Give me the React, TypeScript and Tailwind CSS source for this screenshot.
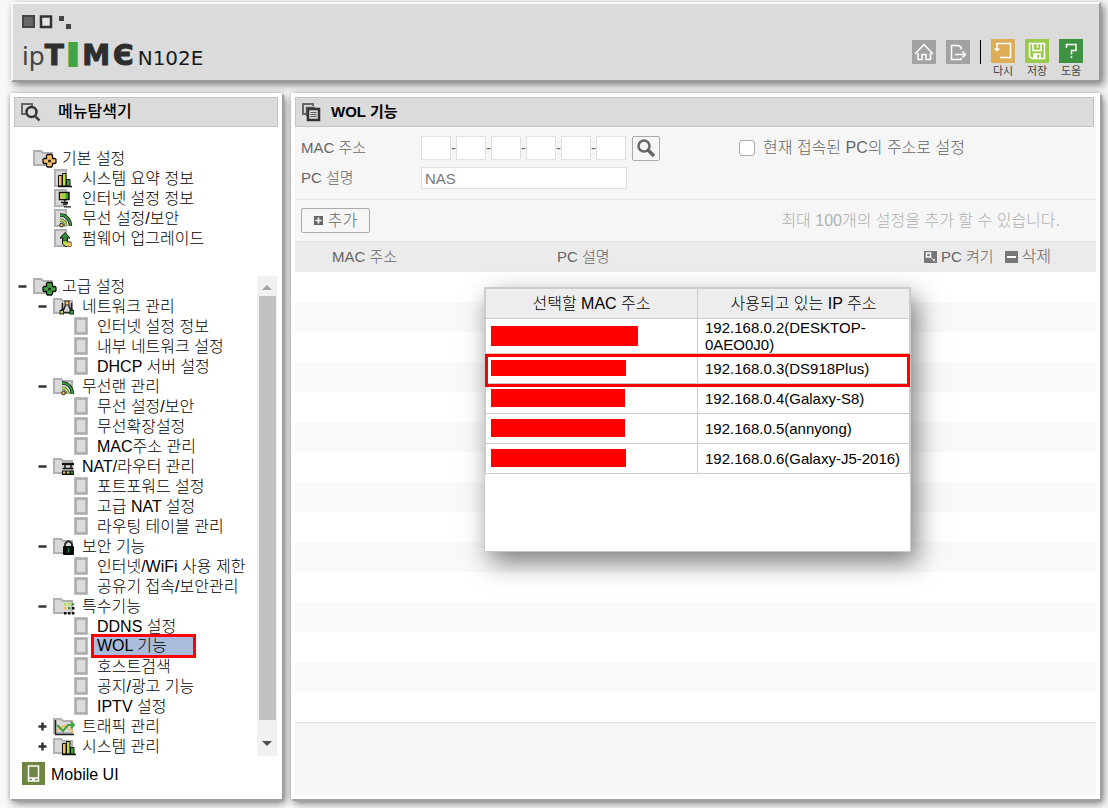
import type { ReactNode } from 'react';

type IconName =
  | 'orange'
  | 'green'
  | 'bars'
  | 'monitor'
  | 'wifi'
  | 'upload'
  | 'network'
  | 'router'
  | 'lock'
  | 'apps'
  | 'traffic'
  | 'folderBars'
  | 'folderWifi'
  | 'page';

interface TreeItem {
  level: 1 | 2 | 3;
  icon: IconName;
  label: string;
  toggle?: 'open' | 'closed';
  selected?: boolean;
}

const basicItems: TreeItem[] = [
  { level: 1, icon: 'orange', label: '기본 설정' },
  { level: 2, icon: 'bars', label: '시스템 요약 정보' },
  { level: 2, icon: 'monitor', label: '인터넷 설정 정보' },
  { level: 2, icon: 'wifi', label: '무선 설정/보안' },
  { level: 2, icon: 'upload', label: '펌웨어 업그레이드' },
];

const advancedItems: TreeItem[] = [
  { level: 1, icon: 'green', label: '고급 설정', toggle: 'open' },
  { level: 2, icon: 'network', label: '네트워크 관리', toggle: 'open' },
  { level: 3, icon: 'page', label: '인터넷 설정 정보' },
  { level: 3, icon: 'page', label: '내부 네트워크 설정' },
  { level: 3, icon: 'page', label: 'DHCP 서버 설정' },
  { level: 2, icon: 'folderWifi', label: '무선랜 관리', toggle: 'open' },
  { level: 3, icon: 'page', label: '무선 설정/보안' },
  { level: 3, icon: 'page', label: '무선확장설정' },
  { level: 3, icon: 'page', label: 'MAC주소 관리' },
  { level: 2, icon: 'router', label: 'NAT/라우터 관리', toggle: 'open' },
  { level: 3, icon: 'page', label: '포트포워드 설정' },
  { level: 3, icon: 'page', label: '고급 NAT 설정' },
  { level: 3, icon: 'page', label: '라우팅 테이블 관리' },
  { level: 2, icon: 'lock', label: '보안 기능', toggle: 'open' },
  { level: 3, icon: 'page', label: '인터넷/WiFi 사용 제한' },
  { level: 3, icon: 'page', label: '공유기 접속/보안관리' },
  { level: 2, icon: 'apps', label: '특수기능', toggle: 'open' },
  { level: 3, icon: 'page', label: 'DDNS 설정' },
  { level: 3, icon: 'page', label: 'WOL 기능', selected: true },
  { level: 3, icon: 'page', label: '호스트검색' },
  { level: 3, icon: 'page', label: '공지/광고 기능' },
  { level: 3, icon: 'page', label: 'IPTV 설정' },
  { level: 2, icon: 'traffic', label: '트래픽 관리', toggle: 'closed' },
  { level: 2, icon: 'folderBars', label: '시스템 관리', toggle: 'closed' },
];

const hosts = [
  { ip: '192.168.0.2(DESKTOP-0AEO0J0)', mask: 'w-[147px] h-5' },
  { ip: '192.168.0.3(DS918Plus)', mask: 'w-[135px] h-4' },
  { ip: '192.168.0.4(Galaxy-S8)', mask: 'w-[134px] h-[18px]' },
  { ip: '192.168.0.5(annyong)', mask: 'w-[134px] h-[18px]' },
  { ip: '192.168.0.6(Galaxy-J5-2016)', mask: 'w-[135px] h-[18px]' },
];

const folder = <path d="M1 3H8L10 5H19V17H1Z" fill="#d9d9d9" stroke="#b0b0b0" strokeWidth="2" />;
const sheet = <path d="M2 2H13V18H2Z" fill="#d9d9d9" stroke="#b0b0b0" strokeWidth="2" />;

const bars = (
  <>
    <path d="M5.5 18V7.500H9V18Z" fill="#f7bd63" stroke="#111" />
    <path d="M9.5 18V5.500H13V18Z" fill="#b4e050" stroke="#111" />
    <path d="M13.5 18V11.500H17V18Z" fill="#3fa33f" stroke="#111" />
    <path d="M5 18.500H19" stroke="#111" strokeWidth="1.500" />
  </>
);

const wifi = (
  <>
    <path d="M7 7C13 7 17 11 17.500 18" fill="none" stroke="#111" strokeWidth="3.400" />
    <path d="M7 7C13 7 17 11 17.500 18" fill="none" stroke="#379a3d" strokeWidth="2" />
    <path d="M7 12C10.500 12 12.800 14.500 13 18" fill="none" stroke="#333" strokeWidth="3" />
    <path d="M7 12C10.500 12 12.800 14.500 13 18" fill="none" stroke="#b4e050" strokeWidth="2" />
    <circle cx="8.500" cy="17" r="1.800" fill="#f7bd63" stroke="#222" />
  </>
);

function clover(color: string) {
  return (
    <>
      <path
        d="M14.500 6.500H18.500L19.500 7.500V10.500H22L23 11.500V14.500L22 15.500H19.500V18L18.500 19H14.500L13.500 18V15.500H11L10 14.500V11.500L11 10.500H13.500V7.500Z"
        fill={color}
        stroke="#111"
        strokeWidth="1.300"
      />
      <circle cx="16.500" cy="13" r="1.500" fill="#222" />
    </>
  );
}

const drawings: Record<IconName, ReactNode> = {
  page: <path d="M1.500 2.500H12.500V17.500H1.500Z" fill="#dcdcdc" stroke="#ababab" strokeWidth="2.500" />,
  orange: (
    <>
      {folder}
      {clover('#f7bd63')}
    </>
  ),
  green: (
    <>
      {folder}
      {clover('#3fa33f')}
    </>
  ),
  bars: (
    <>
      {sheet}
      {bars}
    </>
  ),
  folderBars: (
    <>
      {folder}
      <g transform="translate(4 0)">{bars}</g>
    </>
  ),
  wifi: (
    <>
      {sheet}
      {wifi}
    </>
  ),
  folderWifi: (
    <>
      {folder}
      <g transform="translate(2 0)">{wifi}</g>
    </>
  ),
  monitor: (
    <>
      {sheet}
      <rect x="6.500" y="4.500" width="9.500" height="7" fill="#3fa33f" stroke="#111" strokeWidth="1.500" />
      <path d="M7.200 5.200H9.500V11H7.200Z" fill="#f7bd63" />
      <path d="M9.500 5.200H12.500V11H9.500Z" fill="#a6d94a" />
      <path d="M11.500 12V14.500M8 14.500H15M10 16.500L15 15.500M11 18.800H18" stroke="#222" strokeWidth="1.300" />
    </>
  ),
  upload: (
    <>
      {sheet}
      <path d="M12 4.500L17 10H14.500V14H18V18.500H12.500L9.500 16V10H7Z" fill="#b4e050" stroke="#111" />
      <path d="M12 5L16.300 9.700H14V13H10V9.700H7.700Z" fill="#2f8c38" stroke="#222" strokeWidth="0.500" />
      <path d="M14 14.500H18V18.500H14Z" fill="#f7bd63" />
    </>
  ),
  network: (
    <>
      {folder}
      <path d="M10 7.500H9.500V12L8.500 15M18 7.500H18.500V12L19.500 15M10 16.500H18M12.500 9.500L10 15M15.500 9.500L18 15" fill="none" stroke="#222" strokeWidth="1.600" />
      <rect x="12" y="5" width="4" height="4" fill="#f7bd63" stroke="#222" />
      <rect x="7" y="14.500" width="3.500" height="3.500" fill="#b4e050" stroke="#222" />
      <rect x="17" y="14.500" width="3.500" height="3.500" fill="#3fa33f" stroke="#222" />
    </>
  ),
  router: (
    <>
      {folder}
      <path d="M9 8H21" fill="none" stroke="#111" strokeWidth="2.400" />
      <path d="M9.500 12.500H20.500M12 8V13M18 8V13" fill="none" stroke="#111" strokeWidth="1.400" />
      <path d="M9 14.500H21V19H9Z" fill="#111" />
      <path d="M10 15.500H12.500V17.500H10Z" fill="#f7bd63" />
      <path d="M14 15.500H16.500V17.500H14Z" fill="#b4e050" />
      <path d="M18 15.500H20V17.500H18Z" fill="#3fa33f" />
    </>
  ),
  lock: (
    <>
      {folder}
      <path d="M12 11V8Q15.500 2.500 19 8V11" fill="none" stroke="#222" strokeWidth="1.800" />
      <rect x="10" y="10" width="11" height="9" rx="1" fill="#0a0a0a" />
      <path d="M15.500 12.500V16.500" stroke="#2f8c38" strokeWidth="1.500" />
    </>
  ),
  apps: (
    <>
      {folder}
      <path d="M11 7H13.500V9.500H11ZM15 7H17.500V9.500H15Z" fill="#b4e050" />
      <path d="M11 11H13.500V13.500H11Z" fill="#f7bd63" />
      <path d="M15 11H17.500V13.500H15ZM19 7H21V9.500H19Z" fill="#3fa33f" />
      <path d="M11 16H13.500V18.500H11ZM15 16H17.500V18.500H15ZM19 16H21.500V18.500H19ZM19 11H21.500V13.500H19Z" fill="#111" />
    </>
  ),
  traffic: (
    <>
      {folder}
      <path d="M2.500 4V18.500H21" fill="none" stroke="#222" strokeWidth="1.500" />
      <path d="M4 15Q10 8 14 11T20 16" fill="none" stroke="#f7bd63" strokeWidth="2" />
      <path d="M4 9L10 15L15 9H20M18 6L21 9L18 12" fill="none" stroke="#3fa33f" strokeWidth="2" />
    </>
  ),
};

function TreeRow({ item }: { item: TreeItem }) {
  const indent = item.level === 1 ? 'pl-1' : item.level === 2 ? 'pl-6' : 'pl-[60px]';
  const iconBox = item.level === 3 ? 'w-[17px]' : 'w-[29px]';
  return (
    <li className={`flex h-5 items-center ${indent}`}>
      {item.level !== 3 && (
        <span className="flex w-[15px] shrink-0">
          {item.toggle && (
            <svg width="9" height="9" viewBox="0 0 9 9" aria-hidden="true">
              <path
                d={item.toggle === 'open' ? 'M0.500 4.500H8.500' : 'M0.500 4.500H8.500M4.500 0.500V8.500'}
                stroke="#333"
                strokeWidth="2.500"
              />
            </svg>
          )}
        </span>
      )}
      <span className={`flex shrink-0 ${iconBox}`}>
        <svg width="24" height="20" viewBox="0 0 24 20" aria-hidden="true" className="shrink-0">
          {drawings[item.icon]}
        </svg>
      </span>
      {item.selected ? (
        <a
          href="#wol"
          className="relative z-10 flex h-6 w-[105px] shrink-0 items-center border-[3px] border-[#ff0000] bg-[#a9bcdc] pl-[3px] whitespace-nowrap"
        >
          {item.label}
        </a>
      ) : (
        <a href="#menu" className={`pt-px whitespace-nowrap ${item.level === 3 ? 'pl-[6px]' : ''}`}>
          {item.label}
        </a>
      )}
    </li>
  );
}

function HeaderButton({ label, color, children }: { label: string; color: string; children: ReactNode }) {
  return (
    <button type="button" className="flex w-6 flex-col items-center text-[11px] leading-4 font-normal whitespace-nowrap text-[#444]">
      <svg width="24" height="24" viewBox="0 0 24 24" fill="none" stroke="#fff" strokeWidth="1.500" className={color} aria-hidden="true">
        {children}
      </svg>
      {label}
    </button>
  );
}

function Header() {
  return (
    <header className="mr-[7px] ml-[11px] flex h-20 justify-between border-2 border-t-[#f7f7f7] border-r-[#999] border-b-[#999] border-l-[#f7f7f7] bg-[#dbdbdb] pr-4 pl-[9px] shadow-[3px_3px_8px_rgba(0,0,0,0.5)]">
      <div className="flex flex-col gap-[7px] pt-[11px]">
        <svg width="52" height="15" viewBox="0 0 52 15" className="shrink-0" aria-hidden="true">
          <rect x="1" y="1" width="11" height="11" fill="#666" stroke="#444" strokeWidth="2" />
          <rect x="19" y="1.500" width="10" height="10.500" fill="#e5e5e5" stroke="#333" strokeWidth="2.500" />
          <rect x="37" y="1" width="5" height="5" fill="#444" />
          <rect x="44" y="9" width="5" height="5" fill="#444" />
        </svg>
        <div className="flex items-baseline leading-9 font-normal text-[#2e2e2e]">
          <span className="font-['Noto_Sans',sans-serif] text-[26px] text-[#444]">ip</span>
          <span className="flex items-baseline gap-[3px] font-['DejaVu_Sans',sans-serif] text-[28px] font-bold [-webkit-text-stroke:1px]">
            <span>T</span>
            <span className="px-px text-[#3fa648] [-webkit-text-stroke:4px]">I</span>
            <span>M</span>
            <span>Є</span>
          </span>
          <span className="pl-1 font-['DejaVu_Sans',sans-serif] text-xl text-[#1a1a1a]">N102E</span>
        </div>
      </div>
      <div className="flex items-start gap-[10px] pt-[35px]">
        <button type="button" aria-label="홈" className="mt-px bg-[#a2a2a2]">
          <svg width="24" height="24" viewBox="0 0 24 24" fill="none" stroke="#fff" strokeWidth="1.500" aria-hidden="true">
            <path d="M3 14L12 4.500L21 14M6 13V19.500H10V14.500H14V19.500H18.500V13" />
          </svg>
        </button>
        <button type="button" aria-label="로그아웃" className="mt-px bg-[#a2a2a2]">
          <svg width="24" height="24" viewBox="0 0 24 24" fill="none" stroke="#fff" strokeWidth="1.500" aria-hidden="true">
            <path d="M15 9.500V7L12.500 5.500H5.500V19.500H15V18M9 14.500H19M16.500 11.500L19.500 14.500L16.500 17.500" />
          </svg>
        </button>
        <span className="mt-px h-6 w-px bg-black" />
        <HeaderButton label="다시" color="bg-[#dcae58]">
          <path d="M6 10V4.500H19.500V18.500H9" />
          <path d="M2.500 9.500H9.500L6 12.500Z" fill="#fff" stroke="none" />
        </HeaderButton>
        <HeaderButton label="저장" color="bg-[#9aca4c]">
          <path d="M4.500 4.500H19.500V19.500H7L4.500 17ZM8 5V11.500H16V5M9 19V15H15V19M12.500 5V9" />
          <path d="M9 15H12V19H9Z" fill="#fff" stroke="none" />
        </HeaderButton>
        <HeaderButton label="도움" color="bg-[#3c9240]">
          <path d="M7.500 9V5.500H17V11.500H12.500V15.500M12.500 17V19" />
        </HeaderButton>
      </div>
    </header>
  );
}

function PanelTitle({ icon, children, style }: { icon: ReactNode; children: ReactNode; style: string }) {
  return (
    <h2 className={`flex h-[30px] shrink-0 items-center border border-[#c4c4c4] bg-[#dbdbdb] pl-[5px] ${style}`}>
      {icon}
      {children}
    </h2>
  );
}

const panel =
  'border-4 border-white shadow-[2px_2px_0_#a0a0a0,3px_4px_8px_rgba(0,0,0,0.55),0_0_4px_rgba(0,0,0,0.2)]';

function Sidebar() {
  return (
    <aside className={`flex w-[272px] shrink-0 flex-col bg-white ${panel}`}>
      <PanelTitle
        style="gap-4 text-base font-medium"
        icon={
          <svg width="22" height="20" viewBox="0 0 22 20" fill="none" aria-hidden="true">
            <path d="M7 12H2V2H12V4" stroke="#666" strokeWidth="2" />
            <circle cx="11.500" cy="10" r="5" stroke="#333" strokeWidth="2.500" />
            <path d="M15 14L19.500 18.500" stroke="#444" strokeWidth="2.500" />
          </svg>
        }
      >
        메뉴탐색기
      </PanelTitle>
      <nav className="pt-[21px]">
        <ul>
          {basicItems.map((item) => (
            <TreeRow key={item.label} item={item} />
          ))}
        </ul>
        <div className="mt-7 flex justify-between">
          <ul className="min-w-0">
            {advancedItems.map((item, i) => (
              <TreeRow key={i} item={item} />
            ))}
          </ul>
          <div className="mr-px flex w-5 shrink-0 flex-col items-center bg-[#f1f1f1]" aria-hidden="true">
            <svg width="20" height="20" viewBox="0 0 20 20">
              <path d="M5 14L10 9L15 14Z" fill="#a3a3a3" />
            </svg>
            <div className="w-[17px] grow bg-[#c1c1c1]" />
            <svg width="20" height="36" viewBox="0 0 20 36">
              <path d="M5 21H15L10 26Z" fill="#505050" />
            </svg>
          </div>
        </div>
      </nav>
      <a href="#mobile" className="mt-[5px] flex items-center gap-[6px] pl-2">
        <svg width="23" height="23" viewBox="0 0 23 23" className="bg-[#6f8544]" fill="none" aria-hidden="true">
          <rect x="6.500" y="4" width="10" height="15" stroke="#fff" strokeWidth="1.500" />
          <path d="M7 16H16M10 17.500H13" stroke="#fff" strokeWidth="1.500" />
        </svg>
        <span className="pt-1">Mobile UI</span>
      </a>
    </aside>
  );
}

function HostPopup() {
  return (
    <div
      role="dialog"
      aria-label="선택할 MAC 주소"
      className="absolute top-[190px] left-[189px] h-[265px] w-[427px] border border-t-2 border-[#ccc] bg-white text-black shadow-[6px_10px_24px_rgba(0,0,0,0.5)]"
    >
      <table className="w-full table-fixed border-collapse">
        <thead>
          <tr className="h-[29px] bg-[#ededed]">
            <th className="border border-t-0 border-[#ccc] pt-px font-light">선택할 MAC 주소</th>
            <th className="border border-t-0 border-[#ccc] pt-px font-light">사용되고 있는 IP 주소</th>
          </tr>
        </thead>
        <tbody>
          {hosts.map((host) => (
            <tr key={host.ip} className="h-[30px]">
              <td className="border border-[#ccc] pl-[5px]">
                <div className={`bg-[#ff0000] ${host.mask}`} />
              </td>
              <td className="border border-[#ccc] pr-1 pl-[7px] text-[15px] leading-[17px]">{host.ip}</td>
            </tr>
          ))}
        </tbody>
      </table>
      <div className="pointer-events-none absolute top-[65px] right-0 left-0 h-[33px] border-[3px] border-[#ff0000]" />
    </div>
  );
}

const inputStyle = 'border border-[#e0e0e0] bg-white text-[15px] text-[#777]';

function MainPanel() {
  return (
    <main className={`relative flex min-w-0 grow flex-col bg-[#f6f6f6] text-[#666] ${panel}`}>
      <div className="pr-[2px] text-black">
        <PanelTitle
          style="gap-[10px] text-[15px] font-bold"
          icon={
            <svg width="20" height="20" viewBox="0 0 20 20" fill="none" aria-hidden="true">
              <path d="M5 12H2V2H12V4" stroke="#666" strokeWidth="2" />
              <rect x="7" y="7" width="11" height="11" stroke="#333" strokeWidth="2.500" />
              <path d="M5.500 14V5.500H14" stroke="#555" strokeWidth="1.500" />
              <path d="M9.500 10.500H15.500M9.500 12.500H15.500M9.500 14.500H15.500" stroke="#555" />
            </svg>
          }
        >
          WOL 기능
        </PanelTitle>
      </div>

      <form className="flex flex-col" onSubmit={(e) => e.preventDefault()}>
        <div className="flex h-[72px] shrink-0 flex-col gap-[6px] pt-2 pl-[6px]">
          <div className="flex h-[26px] items-center">
            <label htmlFor="mac-1" className="w-[120px] text-[15px]">
              MAC 주소
            </label>
            <div className="mr-[6px] flex items-center">
              {[1, 2, 3, 4, 5, 6].map((n) => (
                <span key={n} className="flex items-center">
                  {n > 1 && <span className="w-[5px] text-center text-[15px]">-</span>}
                  <input id={`mac-${n}`} aria-label={`MAC 주소 ${n}`} className={`h-6 w-[30px] ${inputStyle}`} />
                </span>
              ))}
            </div>
            <button type="button" aria-label="검색" className="flex h-[25px] w-7 items-center justify-center rounded-[2px] border border-[#aaa]">
              <svg width="20" height="20" viewBox="0 0 20 20" fill="none" stroke="#666" aria-hidden="true">
                <circle cx="8" cy="8" r="5.500" strokeWidth="2.500" />
                <path d="M12 12L18 18" strokeWidth="3.500" />
              </svg>
            </button>
            <label className="ml-[79px] flex items-center gap-2 whitespace-nowrap">
              <input type="checkbox" className="h-4 w-4 appearance-none rounded-[3px] border border-[#aaa] bg-white" />
              현재 접속된 PC의 주소로 설정
            </label>
          </div>
          <div className="flex h-[22px] items-center">
            <label htmlFor="pc-name" className="w-[120px] text-[15px]">
              PC 설명
            </label>
            <input id="pc-name" defaultValue="NAS" className={`h-[22px] w-[206px] pl-[3px] ${inputStyle}`} />
          </div>
        </div>
        <div className="flex h-[43px] items-center justify-between border-y border-[#e2e2e2] pr-[36px] pl-[6px]">
          <button type="submit" className="flex h-[25px] w-[69px] items-center justify-center gap-[5px] rounded-[2px] border border-[#aaa]">
            <svg width="9" height="9" viewBox="0 0 9 9" className="bg-[#666]" aria-hidden="true">
              <path d="M4.500 1.500V7.500M1.500 4.500H7.500" stroke="#fff" strokeWidth="1.500" />
            </svg>
            추가
          </button>
          <p className="text-[#b0b0b0]">최대 100개의 설정을 추가 할 수 있습니다.</p>
        </div>
      </form>

      <table className="w-full table-fixed border-collapse">
        <thead>
          <tr className="h-[30px] bg-[#ebebeb] text-left text-[15px]">
            <th className="w-[262px] pl-[37px] font-light">MAC 주소</th>
            <th className="font-light">PC 설명</th>
            <th className="pr-[45px] font-light">
              <div className="flex items-center justify-end gap-[11px]">
                <button type="button" className="flex items-center gap-1">
                  <svg width="13" height="12" viewBox="0 0 13 12" className="bg-[#777]" fill="none" stroke="#fff" aria-hidden="true">
                    <rect x="2.500" y="2" width="4" height="4" strokeWidth="1.500" />
                    <path d="M7 6.500L11 10.500M9 10L11 8" />
                  </svg>
                  PC 켜기
                </button>
                <button type="button" className="flex items-center gap-1">
                  <svg width="13" height="12" viewBox="0 0 13 12" className="bg-[#777]" aria-hidden="true">
                    <path d="M2 6H11" stroke="#fff" strokeWidth="2" />
                  </svg>
                  <span className="text-base">삭제</span>
                </button>
              </div>
            </th>
          </tr>
        </thead>
        <tbody className="border-b border-[#e2e2e2]">
          {Array.from({ length: 15 }, (_, i) => (
            <tr key={i} className="h-[30px] bg-white even:bg-[#f9f9f9]">
              <td />
              <td />
              <td />
            </tr>
          ))}
        </tbody>
      </table>
      <HostPopup />
    </main>
  );
}

export default function App() {
  return (
    <div className="flex min-h-screen flex-col gap-[11px] bg-[#f8f8f8] pt-[2px] pb-[9px] font-['Liberation_Sans','Noto_Sans_CJK_KR',sans-serif] text-base leading-5 font-light text-black">
      <Header />
      <div className="flex grow gap-[9px] pr-2 pl-[10px]">
        <Sidebar />
        <MainPanel />
      </div>
    </div>
  );
}
